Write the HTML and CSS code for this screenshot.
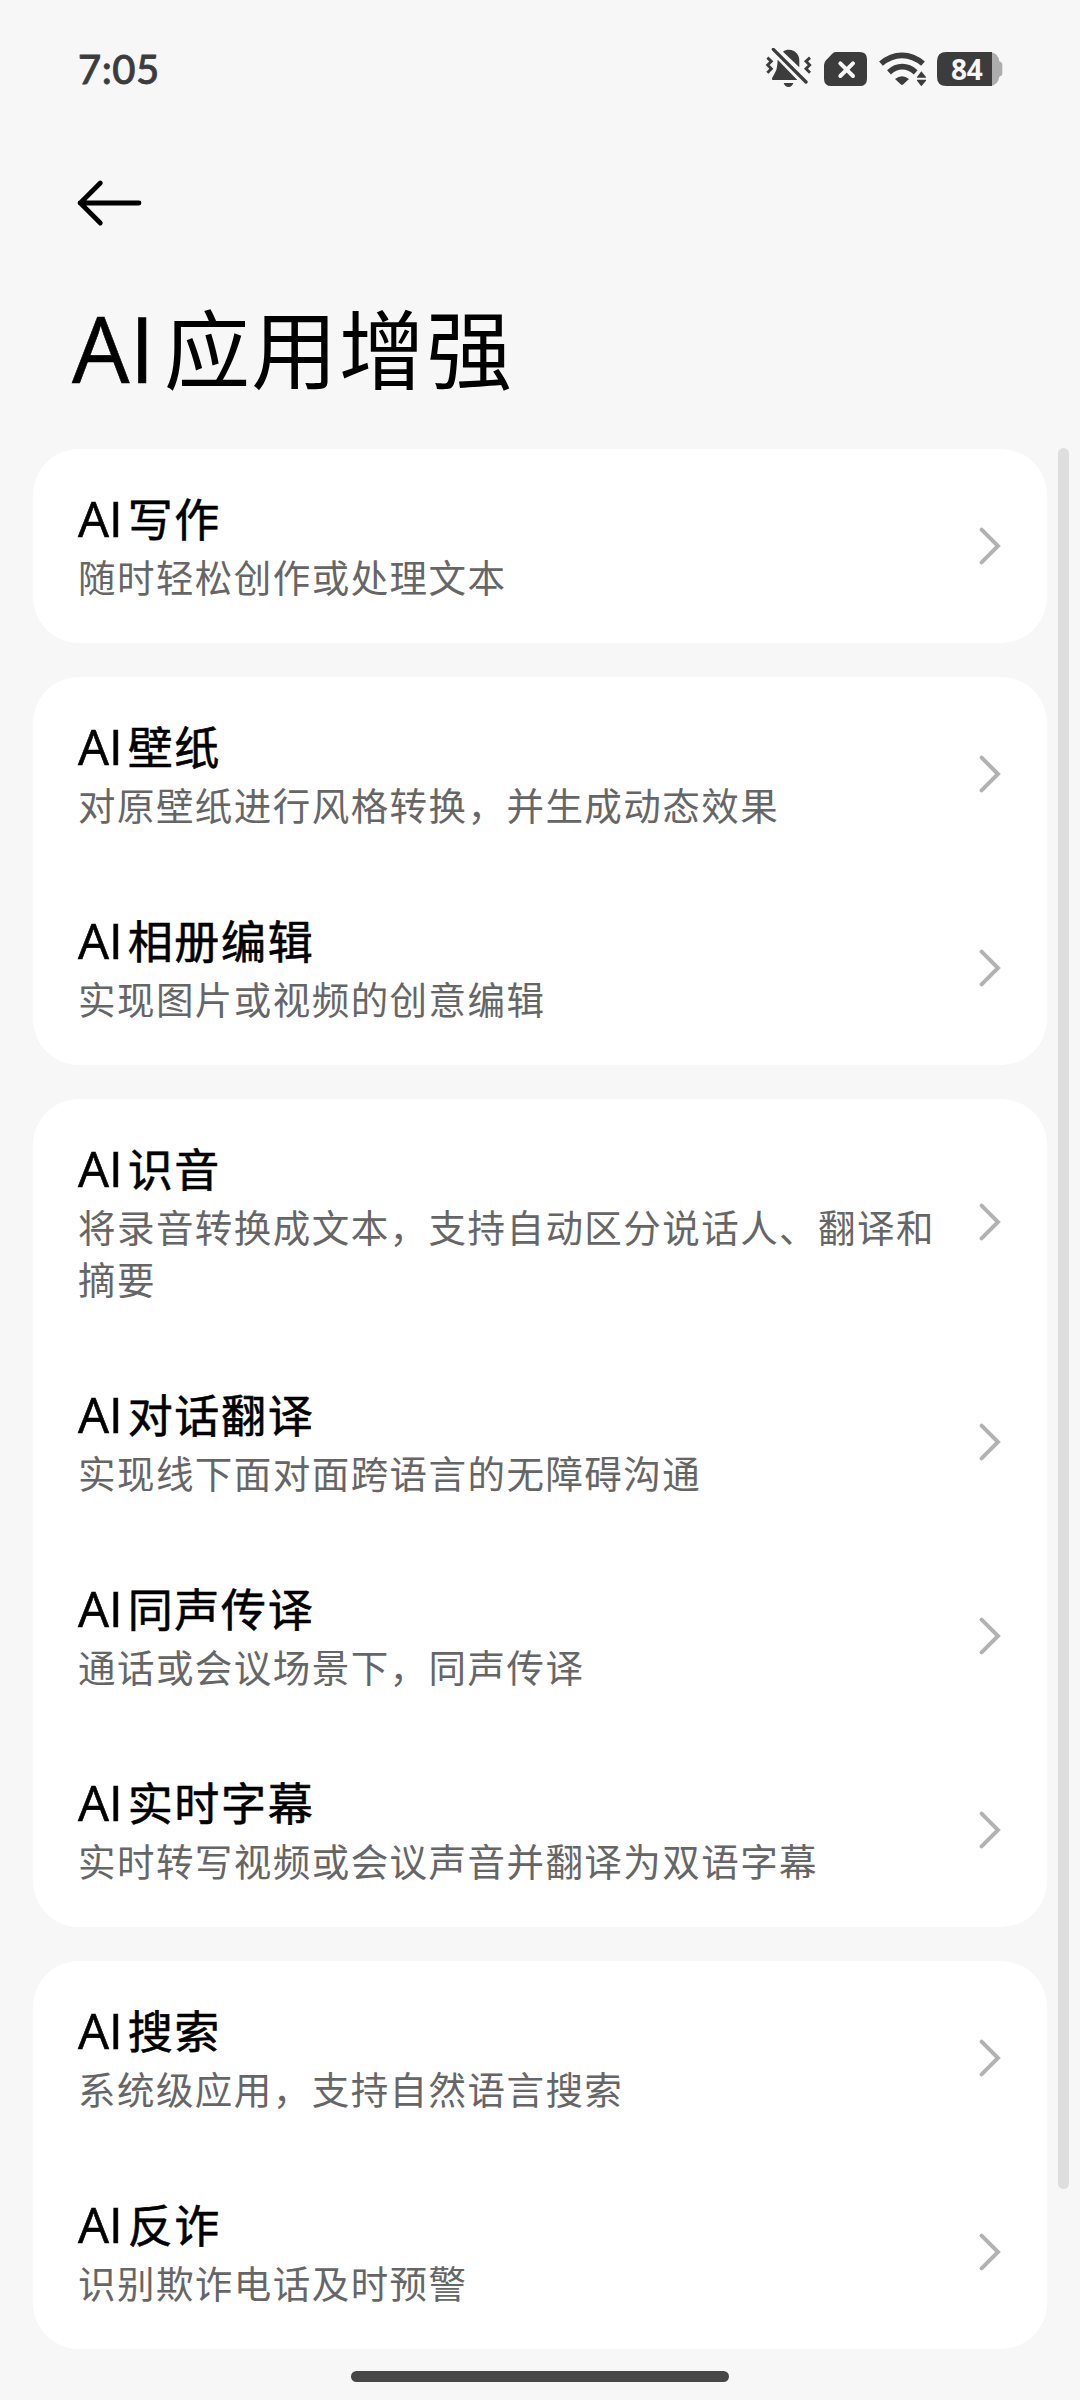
FILE: index.html
```html
<!DOCTYPE html>
<html lang="zh-CN">
<head>
<meta charset="utf-8">
<title>AI应用增强</title>
<link rel="stylesheet" href="styles.css">
</head>
<body>
<svg width="0" height="0" class="defs"><symbol id="chev" viewBox="0 0 22 38"><path d="M2.6 2.6 19 19 2.6 35.4" fill="none" stroke="#b2b2b2" stroke-width="4" stroke-linecap="round" stroke-linejoin="miter"/></symbol></svg>
<div class="screen">
  <header class="status">
    <span class="time">7:05</span>
    <div class="icons">
      <svg class="bell" viewBox="75 54 141 126" width="47" height="42">
        <path d="M129 65C134 60 140 59 147 59C166 60 178 74 178 92V112Z" fill="#3c3c3c"/>
        <path d="M113 89 172 150H99Q94 150 96 145L108 122Q112 112 113 89Z" fill="#3c3c3c"/>
        <path d="M131 159H160Q156 171 145.500 171Q135 171 131 159Z" fill="#3c3c3c"/>
        <path d="M100 58 198 156" stroke="#3c3c3c" stroke-width="10" stroke-linecap="round"/>
        <path d="M82 83 94 94 83 105 94 116 82 128M210 83 198 94 209 105 198 116 210 128" fill="none" stroke="#3c3c3c" stroke-width="8.500"/>
      </svg>
      <svg class="sim" viewBox="252 66 129 102" width="43" height="34">
        <path d="M287 66H359Q381 66 381 88V146Q381 168 359 168H274Q252 168 252 146V105Q252 97 258 91L276 72Q281 66 287 66Z" fill="#3c3c3c"/>
        <path d="M301 100 339 138M339 100 301 138" stroke="#f7f7f7" stroke-width="12" stroke-linecap="round"/>
      </svg>
      <svg class="wifi" viewBox="417 66 144 102" width="48" height="34">
        <path d="M423 101Q452 76 486 76Q520 76 549 101" fill="none" stroke="#3c3c3c" stroke-width="17"/>
        <path d="M447 127Q465 110 487 110Q508 110 527 127" fill="none" stroke="#3c3c3c" stroke-width="17"/>
        <path d="M465 147Q486 130 507 147L490 163Q486 167 482 163Z" fill="#3c3c3c"/>
        <path d="M544 124 558 141V143H531V141ZM531 149H558V152L544 169 531 152Z" fill="#3c3c3c"/>
      </svg>
      <div class="battery">
        <svg viewBox="591 66 198 102" width="66" height="34">
          <path d="M740 66H750Q775 69 778 94L784 97Q787 99 787 104V130Q787 135 784 137L778 140Q774 166 750 168H740Z" fill="#adadad"/>
          <path d="M619 66H756V168H619Q591 168 591 140V94Q591 66 619 66Z" fill="#3c3c3c"/>
        </svg>
        <span class="level">84</span>
      </div>
    </div>
  </header>
  <nav class="nav">
    <svg viewBox="0 0 66 48" width="66" height="48"><path d="M63 24H4M24.300 4 4.300 24 24.300 44" fill="none" stroke="#000" stroke-width="4.800" stroke-linecap="round" stroke-linejoin="round"/></svg>
  </nav>
  <h1 class="heading"><span class="latin">AI</span>应用增强</h1>
  <main class="list">
    <section class="card">
      <div class="row"><div class="text"><h2><span class="latin">AI</span>写作</h2><p>随时轻松创作或处理文本</p></div><svg class="chev"><use href="#chev"/></svg></div>
    </section>
    <section class="card">
      <div class="row"><div class="text"><h2><span class="latin">AI</span>壁纸</h2><p>对原壁纸进行风格转换，并生成动态效果</p></div><svg class="chev"><use href="#chev"/></svg></div>
      <div class="row"><div class="text"><h2><span class="latin">AI</span>相册编辑</h2><p>实现图片或视频的创意编辑</p></div><svg class="chev"><use href="#chev"/></svg></div>
    </section>
    <section class="card">
      <div class="row"><div class="text"><h2><span class="latin">AI</span>识音</h2><p>将录音转换成文本，支持自动区分说话人、翻译和摘要</p></div><svg class="chev"><use href="#chev"/></svg></div>
      <div class="row"><div class="text"><h2><span class="latin">AI</span>对话翻译</h2><p>实现线下面对面跨语言的无障碍沟通</p></div><svg class="chev"><use href="#chev"/></svg></div>
      <div class="row"><div class="text"><h2><span class="latin">AI</span>同声传译</h2><p>通话或会议场景下，同声传译</p></div><svg class="chev"><use href="#chev"/></svg></div>
      <div class="row"><div class="text"><h2><span class="latin">AI</span>实时字幕</h2><p>实时转写视频或会议声音并翻译为双语字幕</p></div><svg class="chev"><use href="#chev"/></svg></div>
    </section>
    <section class="card">
      <div class="row"><div class="text"><h2><span class="latin">AI</span>搜索</h2><p>系统级应用，支持自然语言搜索</p></div><svg class="chev"><use href="#chev"/></svg></div>
      <div class="row"><div class="text"><h2><span class="latin">AI</span>反诈</h2><p>识别欺诈电话及时预警</p></div><svg class="chev"><use href="#chev"/></svg></div>
    </section>
  </main>
  <div class="scrollbar"></div>
  <div class="home"></div>
</div>
</body>
</html>
```
FILE: styles.css
```css
* { box-sizing: border-box; margin: 0; padding: 0; }
body { background: #f7f7f7; font-family: "Noto Sans CJK SC", sans-serif; }
svg { display: block; flex: none; }
.defs { position: absolute; }
.screen { position: relative; width: 1080px; height: 2400px; overflow: hidden; }
.status { display: flex; justify-content: space-between; align-items: center; height: 138px; padding: 0 77px 0 78px; }
.time { font: 500 40px/60px Lato, "Open Sans", sans-serif; color: #3c3c3c; letter-spacing: 0.5px; -webkit-text-stroke: 0.8px #3c3c3c; }
.icons { display: flex; align-items: center; gap: 12px; }
.battery { display: grid; align-items: center; margin-left: -2px; }
.battery > * { grid-area: 1 / 1; }
.level { padding-left: 14px; font: 700 28px/34px "Noto Sans", sans-serif; letter-spacing: -0.3px; color: #f7f7f7; }
.nav { height: 130px; padding: 41px 0 0 76px; }
.heading { height: 181px; padding: 18px 0 0 72px; font-size: 86px; line-height: 120px; font-weight: 400; letter-spacing: 1.4px; color: #000; }
.latin { font-family: "Open Sans", sans-serif; }
.heading .latin { font-size: 91px; letter-spacing: 0; margin-right: 9px; -webkit-text-stroke: 0.6px #000; }
.list { display: flex; flex-direction: column; gap: 34px; padding: 0 33px; }
.card { background: #fff; border-radius: 46px; }
.row { display: flex; align-items: center; justify-content: space-between; padding: 39px 46px 41px 45px; }
.text { width: 885px; flex: none; }
.row h2 { font-size: 45px; line-height: 60px; height: 60px; font-weight: 400; letter-spacing: 1.7px; color: #000; -webkit-text-stroke: 0.6px #000; }
.row .latin { font-size: 49px; letter-spacing: 0; margin-right: 5px; line-height: 1; }
.row p { margin-top: 2px; font-size: 37.5px; line-height: 52px; letter-spacing: 1.45px; color: #666; }
.chev { width: 22px; height: 38px; position: relative; top: 1px; }
.scrollbar { position: absolute; left: 1058px; top: 448px; width: 11px; height: 1741px; border-radius: 6px; background: #dedede; }
.home { position: absolute; left: 351px; top: 2371px; width: 378px; height: 11px; border-radius: 6px; background: #474747; }
```
